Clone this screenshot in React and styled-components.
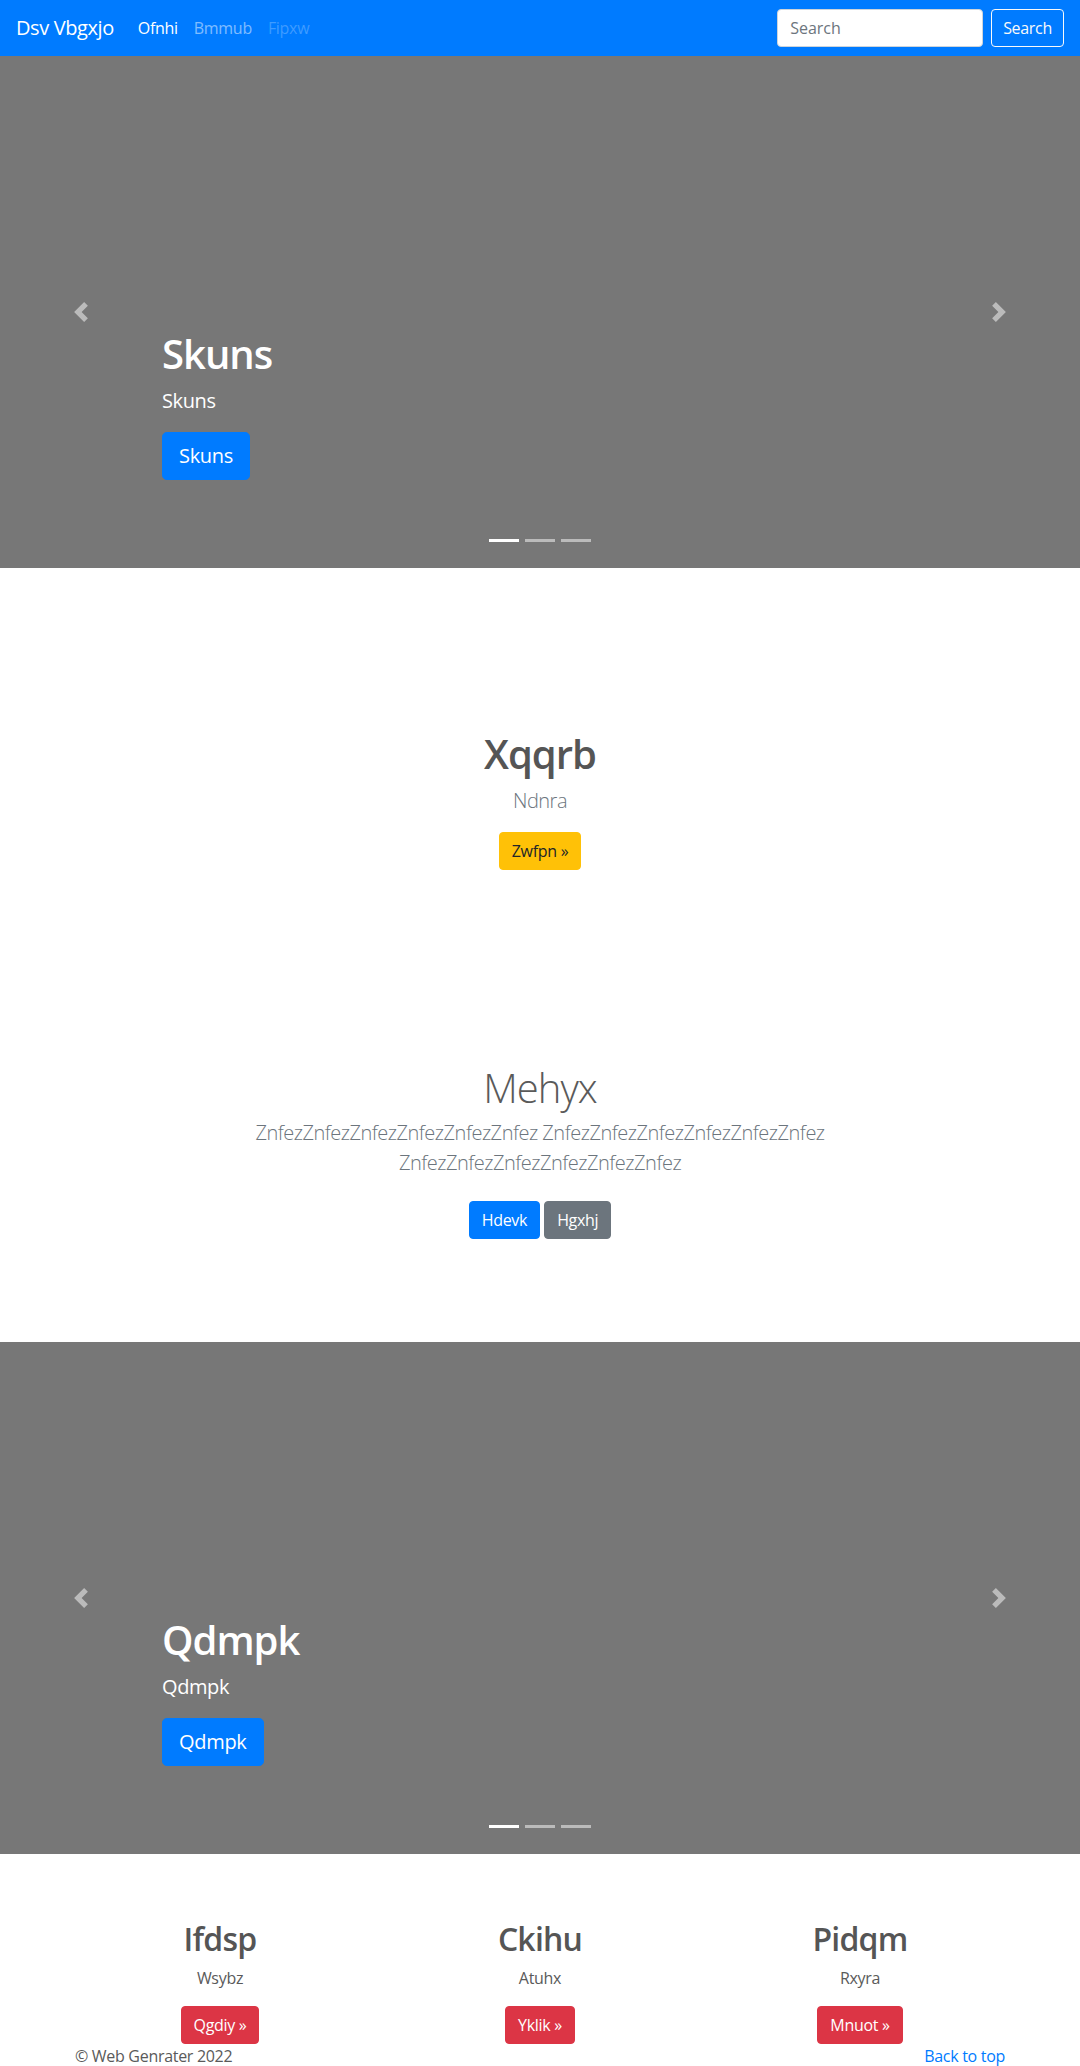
import React from 'react';
import styled, { createGlobalStyle } from 'styled-components';

const GlobalStyle = createGlobalStyle`
  * { box-sizing: border-box; }
  body {
    margin: 0;
    font-family: "Open Sans", "Noto Sans", "Liberation Sans", sans-serif;
    font-size: 16px;
    line-height: 1.5;
    color: #5a5a5a;
    background: #fff;
  }
`;

const Navbar = styled.header`
  display: flex;
  align-items: center;
  height: 56px;
  padding: 8px 16px;
  background-color: #007bff;
`;

const Brand = styled.a`
  color: #fff;
  font-size: 20px;
  line-height: 30px;
  margin-right: 16px;
  text-decoration: none;
  letter-spacing: -0.4px;
`;

const NavList = styled.nav`
  display: flex;
  align-items: center;
`;

const NavLink = styled.a`
  padding: 8px;
  font-size: 16px;
  letter-spacing: -0.3px;
  text-decoration: none;
  color: ${({ $state }) =>
    $state === 'active'
      ? '#fff'
      : $state === 'disabled'
      ? 'rgba(255, 255, 255, 0.25)'
      : 'rgba(255, 255, 255, 0.5)'};
`;

const SearchForm = styled.form`
  display: flex;
  align-items: center;
  margin: 0 0 0 auto;
`;

const SearchInput = styled.input`
  width: 206px;
  height: 38px;
  margin-right: 8px;
  padding: 6px 12px;
  font: inherit;
  font-size: 16px;
  color: #495057;
  background: #fff;
  border: 1px solid #ced4da;
  border-radius: 4px;
  &::placeholder {
    color: #6c757d;
  }
`;

const OutlineButton = styled.button`
  height: 38px;
  padding: 6px 11px;
  font: inherit;
  font-size: 16px;
  letter-spacing: -0.3px;
  color: #f8f9fa;
  background: transparent;
  border: 1px solid #f8f9fa;
  border-radius: 4px;
`;

const Slide = styled.section`
  position: relative;
  height: 512px;
  display: flex;
  flex-direction: column;
  justify-content: flex-end;
  padding: 0 15% 88px;
  background-color: #777;
  color: #fff;
`;

const CaptionTitle = styled.h1`
  margin: 0 0 8px;
  font-size: 40px;
  font-weight: 600;
  line-height: 1.2;
  letter-spacing: -1px;
`;

const CaptionText = styled.p`
  margin: 0 0 16px;
  font-size: 20px;
  line-height: 30px;
  letter-spacing: -0.4px;
`;

const Button = styled.a`
  display: inline-block;
  align-self: ${({ $self }) => $self || 'auto'};
  padding: ${({ $size }) => ($size === 'lg' ? '8px 16px' : '6px 12px')};
  font-size: ${({ $size }) => ($size === 'lg' ? '20px' : '16px')};
  line-height: 1.5;
  letter-spacing: -0.3px;
  border-radius: ${({ $size }) => ($size === 'lg' ? '4.8px' : '4px')};
  text-decoration: none;
  border: 1px solid ${({ $bg }) => $bg};
  background-color: ${({ $bg }) => $bg};
  color: ${({ $fg }) => $fg || '#fff'};
`;

const Control = styled.a`
  position: absolute;
  top: 0;
  bottom: 0;
  ${({ $side }) => ($side === 'prev' ? 'left: 0;' : 'right: 0;')}
  width: 15%;
  display: flex;
  align-items: center;
  justify-content: center;
  opacity: 0.5;
  svg {
    width: 20px;
    height: 20px;
  }
`;

const Indicators = styled.ol`
  position: absolute;
  left: 0;
  right: 0;
  bottom: 0;
  display: flex;
  justify-content: center;
  margin: 0 0 16px;
  padding: 0;
  list-style: none;
`;

const Indicator = styled.li`
  width: 30px;
  height: 3px;
  margin: 10px 3px;
  background-color: #fff;
  opacity: ${({ $active }) => ($active ? 1 : 0.5)};
`;

const Carousel = ({ title }) => (
  <Slide>
    <CaptionTitle>{title}</CaptionTitle>
    <CaptionText>{title}</CaptionText>
    <Button $size="lg" $bg="#007bff" $self="flex-start" href="#">
      {title}
    </Button>
    <Control $side="prev" href="#">
      <svg viewBox="0 0 8 8" fill="#fff">
        <path d="M5.25 0l-4 4 4 4 1.5-1.5L4.25 4l2.5-2.5L5.25 0z" />
      </svg>
    </Control>
    <Control $side="next" href="#">
      <svg viewBox="0 0 8 8" fill="#fff">
        <path d="M2.75 0l-1.5 1.5L3.75 4l-2.5 2.5L2.75 8l4-4-4-4z" />
      </svg>
    </Control>
    <Indicators>
      <Indicator $active />
      <Indicator />
      <Indicator />
    </Indicators>
  </Slide>
);

const Feature = styled.section`
  display: flex;
  flex-direction: column;
  align-items: center;
  padding: 162px 0 98px;
  text-align: center;
`;

const FeatureTitle = styled.h2`
  margin: 0 0 8px;
  font-size: 40px;
  font-weight: 600;
  line-height: 1.2;
  letter-spacing: -1px;
  color: #555;
`;

const Lead = styled.p`
  max-width: 610px;
  margin: 0 0 16px;
  font-size: 20px;
  font-weight: 300;
  line-height: 1.5;
  letter-spacing: -0.5px;
  color: #6c757d;
`;

const Jumbotron = styled.section`
  display: flex;
  flex-direction: column;
  align-items: center;
  padding: 96px 0 95px;
  text-align: center;
`;

const JumboTitle = styled.h1`
  margin: 0 0 6px;
  font-size: 40px;
  font-weight: 300;
  line-height: 1.2;
  letter-spacing: -1px;
  color: #5a5a5a;
`;

const ButtonRow = styled.div`
  display: flex;
  gap: 4px;
  margin: 7px 0 8px;
`;

const Marketing = styled.section`
  display: grid;
  grid-template-columns: repeat(3, 1fr);
  width: 960px;
  margin: 0 auto;
  padding-top: 66px;
`;

const Column = styled.div`
  display: flex;
  flex-direction: column;
  align-items: center;
  padding: 0 15px;
  text-align: center;
`;

const ColumnTitle = styled.h2`
  margin: 0 0 8px;
  font-size: 32px;
  font-weight: 600;
  line-height: 1.2;
  letter-spacing: -0.8px;
  color: #555;
`;

const ColumnText = styled.p`
  margin: 0 0 16px;
  letter-spacing: -0.3px;
`;

const Footer = styled.footer`
  display: flex;
  justify-content: space-between;
  width: 960px;
  margin: 0 auto;
  padding: 0 15px 48px;
  letter-spacing: -0.3px;
`;

const FooterLink = styled.a`
  color: #007bff;
  text-decoration: none;
`;

const columns = [
  { title: 'Ifdsp', text: 'Wsybz', cta: 'Qgdiy »' },
  { title: 'Ckihu', text: 'Atuhx', cta: 'Yklik »' },
  { title: 'Pidqm', text: 'Rxyra', cta: 'Mnuot »' },
];

const App = () => (
  <>
    <GlobalStyle />
    <Navbar>
      <Brand href="#">Dsv Vbgxjo</Brand>
      <NavList>
        <NavLink $state="active" href="#">Ofnhi</NavLink>
        <NavLink href="#">Bmmub</NavLink>
        <NavLink $state="disabled" href="#">Fipxw</NavLink>
      </NavList>
      <SearchForm onSubmit={(e) => e.preventDefault()}>
        <SearchInput type="text" placeholder="Search" />
        <OutlineButton type="submit">Search</OutlineButton>
      </SearchForm>
    </Navbar>

    <Carousel title="Skuns" />

    <Feature>
      <FeatureTitle>Xqqrb</FeatureTitle>
      <Lead>Ndnra</Lead>
      <Button $bg="#ffc107" $fg="#212529" href="#">Zwfpn »</Button>
    </Feature>

    <Jumbotron>
      <JumboTitle>Mehyx</JumboTitle>
      <Lead>
        ZnfezZnfezZnfezZnfezZnfezZnfez ZnfezZnfezZnfezZnfezZnfezZnfez
        ZnfezZnfezZnfezZnfezZnfezZnfez
      </Lead>
      <ButtonRow>
        <Button $bg="#007bff" href="#">Hdevk</Button>
        <Button $bg="#6c757d" href="#">Hgxhj</Button>
      </ButtonRow>
    </Jumbotron>

    <Carousel title="Qdmpk" />

    <Marketing>
      {columns.map((c) => (
        <Column key={c.title}>
          <ColumnTitle>{c.title}</ColumnTitle>
          <ColumnText>{c.text}</ColumnText>
          <Button $bg="#dc3545" href="#">{c.cta}</Button>
        </Column>
      ))}
    </Marketing>

    <Footer>
      <span>© Web Genrater 2022</span>
      <FooterLink href="#">Back to top</FooterLink>
    </Footer>
  </>
);

export default App;
